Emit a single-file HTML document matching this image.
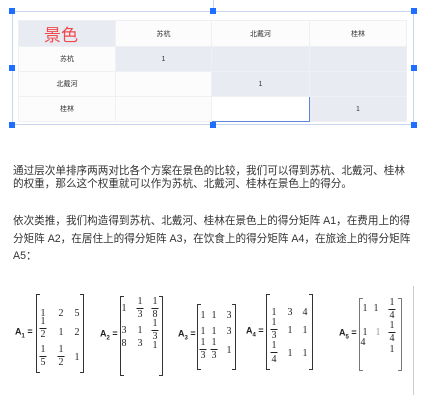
<!DOCTYPE html>
<html><head><meta charset="utf-8"><style>
body{margin:0;width:444px;height:411px;background:#fff;position:relative;overflow:hidden;font-family:"Liberation Sans","Noto Sans CJK SC",sans-serif;}
.a{position:absolute}
.h{position:absolute;width:6px;height:6px;background:#1e6fff;}
table{position:absolute;left:18px;top:20px;border-collapse:collapse;width:388px;table-layout:fixed}
td{height:24px;text-align:center;font-size:7px;color:#333;border:1px solid #eef0f4;padding:0}
.g{background:#e8ebf2}.w{background:#fcfcfd}
.p{position:absolute;left:13px;font-size:10.6px;color:#333;width:403px}
.c{position:absolute;transform:translate(-50%,-50%);font-family:"Liberation Serif",serif;font-size:10px;color:#222;line-height:1}
.f{position:absolute;height:1px;width:7px;background:#222;transform:translateX(-50%)}
.bl{position:absolute;border:1px solid #333;border-right:none;width:3px}
.br{position:absolute;border:1px solid #333;border-left:none;width:3px}
.lb{position:absolute;font-size:9px;font-weight:bold;color:#222;transform:translateY(-50%)}
.lb sub{font-size:6px}
</style></head><body>
<div class="a" style="left:12px;top:11px;width:402px;height:114px;border:1px solid #c9d6f0;box-sizing:border-box"></div>
<div class="a" style="left:213px;top:0;width:1px;height:11px;background:#c9d6f0"></div>
<div class="h" style="left:9px;top:8px"></div><div class="h" style="left:210px;top:8px"></div><div class="h" style="left:411px;top:8px"></div>
<div class="h" style="left:9px;top:65px"></div><div class="h" style="left:411px;top:65px"></div>
<div class="h" style="left:9px;top:122px"></div><div class="h" style="left:210px;top:122px"></div><div class="h" style="left:411px;top:122px"></div>
<table>
<colgroup><col style="width:97px"><col style="width:96px"><col style="width:98px"><col style="width:97px"></colgroup>
<tr><td class="g" style="font-size:17px;color:#f04a4a;text-align:left;padding-left:25px">景色</td><td class="w">苏杭</td><td class="w">北戴河</td><td class="w">桂林</td></tr>
<tr><td class="w">苏杭</td><td class="g">1</td><td class="g"></td><td class="g"></td></tr>
<tr><td class="w">北戴河</td><td class="w"></td><td class="g">1</td><td class="g"></td></tr>
<tr><td class="w">桂林</td><td class="w"></td><td style="border:1px solid #5b86d6;background:#fff"></td><td class="g">1</td></tr>
</table>
<div class="p" style="top:165px;line-height:13px;width:399px">通过层次单排序两两对比各个方案在景色的比较，我们可以得到苏杭、北戴河、桂林的权重，那么这个权重就可以作为苏杭、北戴河、桂林在景色上的得分。</div>
<div class="p" style="top:213px;line-height:17.5px">依次类推，我们构造得到苏杭、北戴河、桂林在景色上的得分矩阵 A1，在费用上的得分矩阵 A2，在居住上的得分矩阵 A3，在饮食上的得分矩阵 A4，在旅途上的得分矩阵A5：</div>

<!-- A1 -->
<div class="lb" style="left:15px;top:333px">A<sub>1</sub> =</div>
<div class="bl" style="left:36px;top:294px;height:77px"></div><div class="br" style="left:80px;top:294px;height:77px"></div>
<span class="c" style="left:43px;top:314px">1</span><span class="c" style="left:61px;top:314px">2</span><span class="c" style="left:77px;top:314px">5</span>
<span class="c" style="left:43px;top:322px">1</span><div class="f" style="left:43px;top:328px"></div><span class="c" style="left:43px;top:335px">2</span>
<span class="c" style="left:61px;top:333px">1</span><span class="c" style="left:77px;top:333px">2</span>
<span class="c" style="left:43px;top:350px">1</span><div class="f" style="left:43px;top:356px"></div><span class="c" style="left:43px;top:363px">5</span>
<span class="c" style="left:61px;top:350px">1</span><div class="f" style="left:61px;top:356px"></div><span class="c" style="left:61px;top:363px">2</span>
<span class="c" style="left:77px;top:358px">1</span>
<!-- A2 -->
<div class="lb" style="left:100px;top:335px">A<sub>2</sub> =</div>
<div class="bl" style="left:120px;top:296px;height:78px"></div><div class="br" style="left:159px;top:296px;height:78px"></div>
<span class="c" style="left:124px;top:309px">1</span>
<span class="c" style="left:140px;top:302px">1</span><div class="f" style="left:140px;top:308px"></div><span class="c" style="left:140px;top:315px">3</span>
<span class="c" style="left:155px;top:302px">1</span><div class="f" style="left:155px;top:308px"></div><span class="c" style="left:155px;top:315px">8</span>
<span class="c" style="left:124px;top:331px">3</span><span class="c" style="left:140px;top:331px">1</span>
<span class="c" style="left:155px;top:324px">1</span><div class="f" style="left:155px;top:330px"></div><span class="c" style="left:155px;top:337px">3</span>
<span class="c" style="left:124px;top:344px">8</span><span class="c" style="left:140px;top:344px">3</span><span class="c" style="left:155px;top:346px">1</span>
<!-- A3 -->
<div class="lb" style="left:178px;top:335px">A<sub>3</sub> =</div>
<div class="bl" style="left:197px;top:304px;height:64px"></div><div class="br" style="left:232px;top:304px;height:64px"></div>
<span class="c" style="left:203px;top:316px">1</span><span class="c" style="left:214px;top:316px">1</span><span class="c" style="left:229px;top:316px">3</span>
<span class="c" style="left:203px;top:332px">1</span><span class="c" style="left:214px;top:332px">1</span><span class="c" style="left:229px;top:332px">3</span>
<span class="c" style="left:203px;top:343px">1</span><div class="f" style="left:203px;top:349px"></div><span class="c" style="left:203px;top:356px">3</span>
<span class="c" style="left:214px;top:343px">1</span><div class="f" style="left:214px;top:349px"></div><span class="c" style="left:214px;top:356px">3</span>
<span class="c" style="left:229px;top:351px">1</span>
<!-- A4 -->
<div class="lb" style="left:246px;top:332px">A<sub>4</sub> =</div>
<div class="bl" style="left:266px;top:294px;height:74px"></div><div class="br" style="left:309px;top:294px;height:74px"></div>
<span class="c" style="left:274px;top:313px">1</span><span class="c" style="left:290px;top:313px">3</span><span class="c" style="left:305px;top:313px">4</span>
<span class="c" style="left:274px;top:323px">1</span><div class="f" style="left:274px;top:329px"></div><span class="c" style="left:274px;top:336px">3</span>
<span class="c" style="left:290px;top:331px">1</span><span class="c" style="left:305px;top:331px">1</span>
<span class="c" style="left:274px;top:346px">1</span><div class="f" style="left:274px;top:352px"></div><span class="c" style="left:274px;top:360px">4</span>
<span class="c" style="left:290px;top:354px">1</span><span class="c" style="left:305px;top:354px">1</span>
<!-- A5 -->
<div class="lb" style="left:339px;top:334px">A<sub>5</sub> =</div>
<div class="bl" style="left:359px;top:298px;height:71px;border-color:#777"></div><div class="br" style="left:398px;top:298px;height:71px;border-color:#777"></div>
<span class="c" style="left:365px;top:309px">1</span><span class="c" style="left:376px;top:309px">1</span>
<span class="c" style="left:392px;top:303px">1</span><div class="f" style="left:392px;top:309px"></div><span class="c" style="left:392px;top:316px">4</span>
<span class="c" style="left:365px;top:333px">1</span><span class="c" style="left:378px;top:333px;color:#999">1</span>
<span class="c" style="left:392px;top:326px">1</span><div class="f" style="left:392px;top:332px"></div><span class="c" style="left:392px;top:339px">4</span>
<span class="c" style="left:363px;top:343px">4</span><span class="c" style="left:392px;top:350px">1</span>
<div class="a" style="left:413px;top:286px;width:1px;height:109px;background:#ccc"></div>
</body></html>
